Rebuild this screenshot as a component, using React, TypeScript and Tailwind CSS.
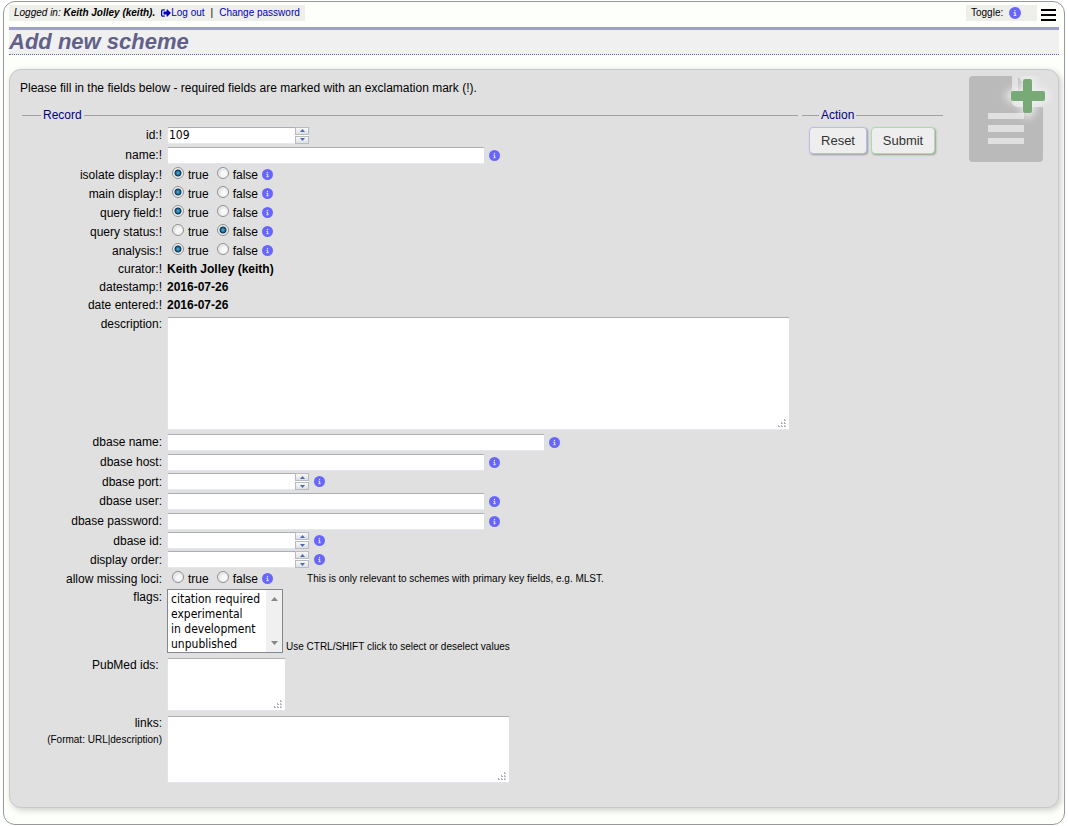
import React, { useId, useRef } from 'react';
import { FaSignOutAlt } from 'react-icons/fa';
import { FaCircleInfo } from 'react-icons/fa6';

const boxStyle =
  'block rounded-[2px] border border-t-[#abadb3] border-r-[#dbdfe6] border-b-[#e3e9ef] border-l-[#e2e3ea] bg-white px-px font-["DejaVu_Sans_Condensed","DejaVu_Sans",sans-serif] text-[12px] text-black outline-none';

const InfoTip: React.FC = () => <FaCircleInfo className="h-[11px] w-[11px] shrink-0 text-[#6666ff]" />;

interface RowProps {
  label: string;
  htmlFor?: string;
  children: React.ReactNode;
  height?: string;
}

// Single line form row: right aligned label then control
const Row: React.FC<RowProps> = ({ label, htmlFor, children, height = 'h-5' }) => (
  <div className={`flex items-center gap-1 ${height}`}>
    {htmlFor ? (
      <label htmlFor={htmlFor} className="mr-px w-[140px] shrink-0 text-right leading-[18px]">
        {label}
      </label>
    ) : (
      <span className="mr-px w-[140px] shrink-0 text-right leading-[18px]">{label}</span>
    )}
    {children}
  </div>
);

const TextRow: React.FC<{ label: string; width?: string; type?: string }> = ({
  label,
  width = 'w-[318px]',
  type = 'text'
}) => {
  const id = useId();
  return (
    <Row label={label} htmlFor={id}>
      <input id={id} type={type} className={`${boxStyle} h-[17px] ${width}`} />
      <InfoTip />
    </Row>
  );
};

const SpinButton: React.FC<{ up?: boolean; onClick: () => void }> = ({ up, onClick }) => (
  <button
    type="button"
    aria-label={up ? 'Increase' : 'Decrease'}
    onClick={onClick}
    className="flex h-2 w-[14px] items-center justify-center border border-[#b9bbc2] bg-linear-to-b from-[#f8f8f8] to-[#dfe0e4]"
  >
    <svg viewBox="0 0 5 3" className="h-[3px] w-[5px] fill-[#4d68b0]">
      {up ? <path d="M0 3 2.5 0 5 3z" /> : <path d="M0 0h5L2.5 3z" />}
    </svg>
  </button>
);

const NumberRow: React.FC<{ label: string; value?: number; height?: string; info?: boolean }> = ({
  label,
  value,
  height = 'h-[19px]',
  info = true
}) => {
  const id = useId();
  const ref = useRef<HTMLInputElement>(null);
  return (
    <Row label={label} htmlFor={id} height={height}>
      <div className="relative">
        <input
          id={id}
          ref={ref}
          type="number"
          defaultValue={value}
          className={`${boxStyle} h-[17px] w-[143px] [appearance:textfield]`}
        />
        <div className="absolute inset-y-0 right-px flex flex-col justify-center gap-px bg-white">
          <SpinButton up onClick={() => ref.current?.stepUp()} />
          <SpinButton onClick={() => ref.current?.stepDown()} />
        </div>
      </div>
      {info && <InfoTip />}
    </Row>
  );
};

const RadioRow: React.FC<{ label: string; value?: boolean; note?: string }> = ({ label, value, note }) => {
  const name = useId();
  const options = [true, false];
  return (
    <Row label={label} height="h-[19px]">
      <div role="radiogroup" aria-label={label} className="flex gap-2 pl-[5px]">
        {options.map((option) => (
          <label key={String(option)} className="flex items-start gap-1">
            <input
              type="radio"
              name={name}
              defaultChecked={value === option}
              className="h-3 w-3 appearance-none rounded-full border border-[#8e8f8f] bg-[radial-gradient(circle_at_60%_60%,#f8f8f8_30%,#c8ccd0_85%)] shadow-[inset_0_0_0_1px_#f4f4f4] checked:bg-[radial-gradient(circle_at_50%_50%,#5fb4d8_0px,#1b6d98_2px,#0c2f4c_3px,#e8ecef_4px)]"
            />
            <span className="pt-px leading-[14px]">{String(option)}</span>
          </label>
        ))}
      </div>
      <InfoTip />
      {note && <span className="ml-[30px] text-[10px]">{note}</span>}
    </Row>
  );
};

const StaticRow: React.FC<{ label: string; value: string }> = ({ label, value }) => (
  <Row label={label} height="h-[18px]">
    <b>{value}</b>
  </Row>
);

const AreaRow: React.FC<{ label: string; size: string; hint?: string }> = ({ label, size, hint }) => {
  const id = useId();
  return (
    <div className="flex items-start gap-[5px] pt-px pb-[2px]">
      <label htmlFor={id} className="w-[140px] shrink-0 text-right leading-[18px] whitespace-pre">
        {label}
        {hint && <span className="block text-[10px] leading-4">{hint}</span>}
      </label>
      <div className="relative pt-[2px]">
        <textarea id={id} className={`${boxStyle} resize-none ${size}`} />
        <svg viewBox="0 0 8 8" className="absolute right-1 bottom-[3px] h-2 w-2 fill-[#b4b4b4]">
          <path d="M6 0h1v1H6zM3 3h1v1H3zM6 3h1v1H6zM0 6h1v1H0zM3 6h1v1H3zM6 6h1v1H6zM6 1h2v1H6zM3 4h2v1H3zM6 4h2v1H6zM0 7h2v1H0zM3 7h2v1H3zM6 7h2v1H6z" />
        </svg>
      </div>
    </div>
  );
};

const FlagsRow: React.FC = () => {
  const flags = ['citation required', 'experimental', 'in development', 'unpublished'];
  return (
    <div className="flex items-start gap-[5px] pb-[2px]">
      <label htmlFor="flags" className="w-[140px] shrink-0 text-right leading-[18px]">
        flags:
      </label>
      <div className="flex items-end gap-[3px] pt-px">
        <div className="flex h-16 w-[116px] border border-[#828790] bg-white">
          <select
            id="flags"
            multiple
            size={4}
            className="block min-w-0 flex-1 appearance-none overflow-hidden pt-[2px] pl-[3px] font-['DejaVu_Sans_Condensed','DejaVu_Sans',sans-serif] text-[12px] leading-[15px] outline-none [scrollbar-width:none]"
          >
            {flags.map((flag) => (
              <option key={flag} className="h-[15px] min-h-0 p-0 leading-[15px]">
                {flag}
              </option>
            ))}
          </select>
          <div className="flex w-4 flex-col items-center justify-between bg-[#f0f0f0] py-[7px]">
            <svg viewBox="0 0 7 4" className="h-1 w-[7px] fill-[#85878a]">
              <path d="M0 4 3.5 0 7 4z" />
            </svg>
            <svg viewBox="0 0 7 4" className="h-1 w-[7px] fill-[#85878a]">
              <path d="M0 0h7L3.5 4z" />
            </svg>
          </div>
        </div>
        <span className="text-[10px] leading-3">Use CTRL/SHIFT click to select or deselect values</span>
      </div>
    </div>
  );
};

const NewRecordIcon: React.FC = () => (
  <svg viewBox="0 0 84 92" className="h-[92px] w-[84px]">
    <defs>
      <filter id="glow" x="-50%" y="-50%" width="200%" height="200%">
        <feGaussianBlur stdDeviation="4" />
      </filter>
    </defs>
    <path d="M4 0H43V26a5 5 0 0 0 5 5H74V82a4 4 0 0 1-4 4H4a4 4 0 0 1-4-4V4a4 4 0 0 1 4-4z" fill="#bababa" />
    <path d="M49 1 72 25H49z" fill="#bababa" />
    <path d="M19 37H55V43H19zM19 49H55V56H19zM19 62H55V68H19z" fill="#e0e0e0" />
    <path d="M59 5V35M44 20H74" stroke="#f0f0f0" strokeWidth="13" strokeLinecap="round" filter="url(#glow)" />
    <path
      d="M56 3h5a2 2 0 0 1 2 2v10h11a2 2 0 0 1 2 2v6a2 2 0 0 1-2 2H63v10a2 2 0 0 1-2 2h-5a2 2 0 0 1-2-2V25H44a2 2 0 0 1-2-2v-6a2 2 0 0 1 2-2h10V5a2 2 0 0 1 2-2z"
      fill="#78aa78"
    />
  </svg>
);

const Header: React.FC = () => (
  <header>
    <div className="flex justify-between text-[10px] leading-4">
      <div className="flex items-center gap-[6px] bg-[#eeeeea] px-[5px]">
        <i>
          Logged in: <b>Keith Jolley (keith).</b>
        </i>
        <a href="#logout" className="flex items-center text-[#0000bb]">
          <FaSignOutAlt className="h-[10px] w-[10px]" />
          Log out
        </a>
        <span>|</span>
        <a href="#password" className="text-[#0000bb]">
          Change password
        </a>
      </div>
      <div className="flex items-center gap-1 pr-[3px]">
        <button type="button" className="flex h-4 w-[71px] items-center gap-[6px] bg-[#eeeeea] pl-[5px]">
          Toggle:
          <FaCircleInfo className="h-3 w-3 text-[#6666ff]" />
        </button>
        <button type="button" aria-label="Menu" className="pt-1">
          <svg viewBox="0 0 15 12" className="block h-3 w-[15px]">
            <path d="M0 0h15v2H0zM0 5h15v2H0zM0 10h15v2H0z" />
          </svg>
        </button>
      </div>
    </div>
    <h1 className="mt-[6px] border-t-3 border-b border-t-[#a0a0d0] border-b-[#6666aa] bg-[#f0f0f0] text-[22px] leading-6 font-bold text-[#606088] italic [border-bottom-style:dotted]">
      Add new scheme
    </h1>
  </header>
);

const App: React.FC = () => {
  return (
    <div className="mx-[3px] mt-px rounded-xl border border-[#999999] bg-[#fdfffa] px-[5px] pt-[3px] pb-4 font-['Liberation_Sans',Arial,sans-serif] text-[12px] leading-4 text-black">
      <Header />

      <form
        className="mt-[14px] flex rounded-xl border border-[#c8c8c8] bg-[#e0e0e0] pt-[6px] pr-[5px] pb-[22px] pl-[10px] shadow-[2px_2px_6px_#cccccc]"
        onSubmit={(e) => e.preventDefault()}
      >
        <div className="min-w-0 flex-1 pt-1">
          <p className="mb-[11px]">
            Please fill in the fields below - required fields are marked with an exclamation mark (!).
          </p>

          <div className="flex items-start gap-1 pl-[2px]">
            {/* Record fields */}
            <fieldset className="min-w-0 flex-1 border-t border-[#a0a0a0]">
              <legend className="ml-[19px] px-[2px] text-[#000080]">Record</legend>
              <div className="pt-[2px]">
                <NumberRow label="id:!" value={109} height="h-5" info={false} />
                <TextRow label="name:!" />
                <RadioRow label="isolate display:!" value={true} />
                <RadioRow label="main display:!" value={true} />
                <RadioRow label="query field:!" value={true} />
                <RadioRow label="query status:!" value={false} />
                <RadioRow label="analysis:!" value={true} />
                <StaticRow label="curator:!" value="Keith Jolley (keith)" />
                <StaticRow label="datestamp:!" value="2016-07-26" />
                <StaticRow label="date entered:!" value="2016-07-26" />
                <AreaRow label="description:" size="h-[113px] w-[623px]" />
                <TextRow label="dbase name:" width="w-[378px]" />
                <TextRow label="dbase host:" />
                <NumberRow label="dbase port:" />
                <TextRow label="dbase user:" />
                <TextRow label="dbase password:" type="password" />
                <NumberRow label="dbase id:" />
                <NumberRow label="display order:" />
                <RadioRow
                  label="allow missing loci:"
                  note="This is only relevant to schemes with primary key fields, e.g. MLST."
                />
                <FlagsRow />
                <AreaRow label={'PubMed ids:\u00a0'} size="h-[53px] w-[119px]" />
                <AreaRow label="links:" size="h-[67px] w-[343px]" hint="(Format: URL|description)" />
              </div>
            </fieldset>

            {/* Actions */}
            <fieldset className="w-[141px] shrink-0 border-t border-[#a0a0a0]">
              <legend className="ml-[17px] px-[2px] text-[#000080]">Action</legend>
              <div className="flex gap-1 pt-1 pl-[7px] text-[13px] text-[#333333]">
                <button
                  type="reset"
                  className="h-[27px] w-[58px] rounded border border-[#bbbbee] bg-[#eeeeee] shadow-[1px_1px_2px_#999999]"
                >
                  Reset
                </button>
                <button
                  type="submit"
                  className="h-[27px] w-[64px] rounded border border-[#aaddaa] bg-[#eeeeee] shadow-[1px_1px_2px_#999999]"
                >
                  Submit
                </button>
              </div>
            </fieldset>
          </div>
        </div>

        <div className="ml-[26px] shrink-0">
          <NewRecordIcon />
        </div>
      </form>
    </div>
  );
};

export default App;
